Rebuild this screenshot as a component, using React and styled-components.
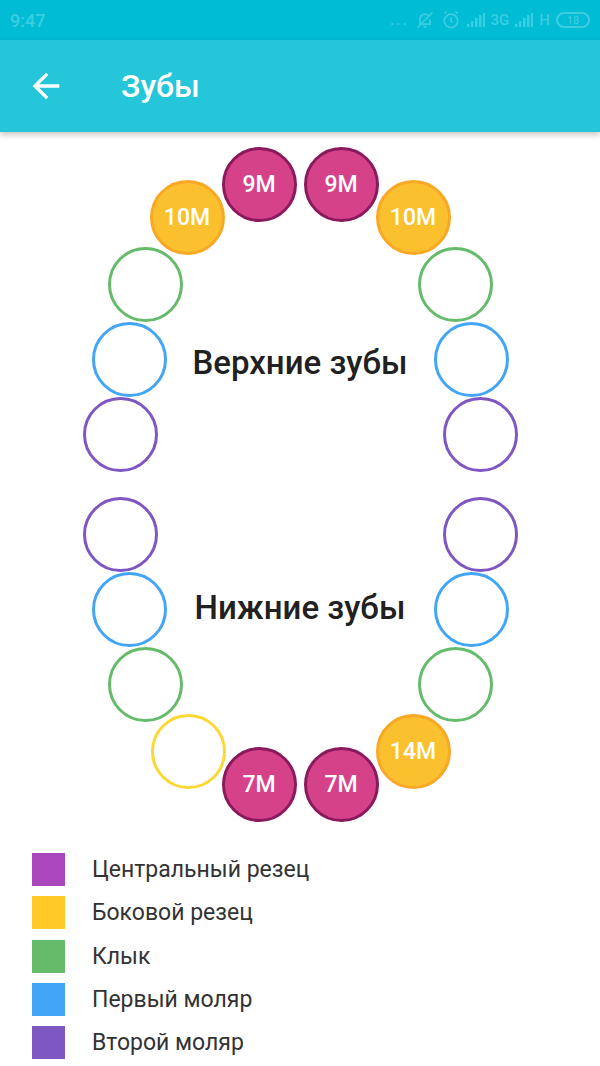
import styled, { createGlobalStyle } from "styled-components"

const GlobalStyle = createGlobalStyle`
  html, body {
    margin: 0;
    padding: 0;
    background: #ffffff;
    font-family: Roboto, "Noto Sans", Arial, sans-serif;
  }
`

const Page = styled.div`
  width: 600px;
  height: 1066px;
  overflow: hidden;
  background: #fff;
  display: flex;
  flex-direction: column;
`

const StatusBar = styled.div`
  height: 40px;
  background: #00bcd4;
  display: flex;
  align-items: center;
  justify-content: space-between;
  padding: 0 10px;
  color: #3ccde1;
  font-size: 18px;
  font-weight: 500;
`

const StatusIcons = styled.div`
  display: flex;
  align-items: center;
  gap: 6px;
  font-size: 15px;
  font-weight: 500;
`

const Battery = styled.div`
  width: 34px;
  height: 16px;
  border: 2px solid #3ccde1;
  border-radius: 9px;
  box-sizing: border-box;
  display: flex;
  align-items: center;
  justify-content: center;
  font-size: 11px;
`

const AppBar = styled.div`
  height: 92px;
  background: #26c6da;
  display: flex;
  align-items: center;
  box-shadow: 0 3px 6px rgba(0, 0, 0, 0.22);
  position: relative;
  z-index: 1;
`

const BackButton = styled.div`
  width: 40px;
  height: 40px;
  margin-left: 26px;
  display: flex;
  align-items: center;
  justify-content: center;
`

const Title = styled.h1`
  margin: 0 0 0 55px;
  color: #fff;
  font-size: 32px;
  font-weight: 500;
`

const Chart = styled.div`
  position: relative;
  height: 698px;
  display: flex;
  flex-direction: column;
  align-items: center;
`

const JawLabel = styled.div`
  font-size: 33px;
  font-weight: 500;
  color: #212121;
  line-height: 36px;
  margin-top: ${(p) => p.$top}px;
`

const Tooth = styled.div`
  position: absolute;
  width: 75px;
  height: 75px;
  box-sizing: border-box;
  border-radius: 50%;
  border: 3px solid ${(p) => p.$border};
  background: ${(p) => p.$fill || "transparent"};
  display: flex;
  align-items: center;
  justify-content: center;
  color: #fff;
  font-size: 23px;
  font-weight: 500;
`

const Legend = styled.div`
  display: flex;
  flex-direction: column;
  gap: 10.3px;
  padding: 23px 0 0 32px;
`

const LegendRow = styled.div`
  display: flex;
  align-items: center;
  gap: 27px;
  height: 33px;
`

const Swatch = styled.div`
  width: 33px;
  height: 33px;
  background: ${(p) => p.$color};
`

const LegendText = styled.span`
  font-size: 23px;
  color: #333;
`

const C = {
  central: "#ab47bc",
  lateral: "#fbc02d",
  canine: "#66bb6a",
  first: "#42a5f5",
  second: "#7e57c2",
}

const pink = { fill: "#d6428a", border: "#8b1a5c" }
const gold = { fill: "#fbc02d", border: "#f9a825" }

// centers relative to the chart top
const teeth = [
  { x: 259, y: 52, ...pink, label: "9M" },
  { x: 341, y: 52, ...pink, label: "9M" },
  { x: 187, y: 85, ...gold, label: "10M" },
  { x: 413, y: 85, ...gold, label: "10M" },
  { x: 145, y: 152, border: C.canine },
  { x: 455, y: 152, border: C.canine },
  { x: 129, y: 227, border: C.first },
  { x: 471, y: 227, border: C.first },
  { x: 120, y: 302, border: C.second },
  { x: 480, y: 302, border: C.second },

  { x: 120, y: 402, border: C.second },
  { x: 480, y: 402, border: C.second },
  { x: 129, y: 477, border: C.first },
  { x: 471, y: 477, border: C.first },
  { x: 145, y: 552, border: C.canine },
  { x: 455, y: 552, border: C.canine },
  { x: 188, y: 619, border: "#fdd835" },
  { x: 413, y: 619, ...gold, label: "14M" },
  { x: 259, y: 652, ...pink, label: "7M" },
  { x: 341, y: 652, ...pink, label: "7M" },
]

const legend = [
  { color: C.central, text: "Центральный резец" },
  { color: "#ffca28", text: "Боковой резец" },
  { color: C.canine, text: "Клык" },
  { color: C.first, text: "Первый моляр" },
  { color: C.second, text: "Второй моляр" },
]

const Signal = () => (
  <svg width="18" height="14" viewBox="0 0 18 14" fill="#3ccde1">
    <rect x="0" y="11" width="2.5" height="3" />
    <rect x="4" y="8" width="2.5" height="6" />
    <rect x="8" y="5" width="2.5" height="9" />
    <rect x="12" y="2" width="2.5" height="12" />
    <rect x="16" y="0" width="2" height="14" />
  </svg>
)

const App = () => {
  return (
    <Page>
      <GlobalStyle />
      <StatusBar>
        <span>9:47</span>
        <StatusIcons>
          <span style={{ letterSpacing: 2 }}>...</span>
          <svg width="20" height="20" viewBox="0 0 24 24" fill="none" stroke="#3ccde1" strokeWidth="2">
            <path d="M6 17V11a6 6 0 0 1 10-4.5M18 11v6H6M10 20h4M3 21L21 3" />
          </svg>
          <svg width="20" height="20" viewBox="0 0 24 24" fill="none" stroke="#3ccde1" strokeWidth="2">
            <circle cx="12" cy="13" r="8" />
            <path d="M12 9v4l2 2M4 4l3-2M20 4l-3-2" />
          </svg>
          <Signal />
          <span>3G</span>
          <Signal />
          <span>H</span>
          <Battery>18</Battery>
        </StatusIcons>
      </StatusBar>
      <AppBar>
        <BackButton>
          <svg width="40" height="40" viewBox="0 0 24 24" fill="#fff">
            <path d="M20 11H7.83l5.59-5.59L12 4l-8 8 8 8 1.41-1.41L7.83 13H20v-2z" />
          </svg>
        </BackButton>
        <Title>Зубы</Title>
      </AppBar>
      <Chart>
        {teeth.map((t, i) => (
          <Tooth
            key={i}
            $border={t.border}
            $fill={t.fill}
            style={{ left: t.x - 37.5, top: t.y - 37.5 }}
          >
            {t.label}
          </Tooth>
        ))}
        <JawLabel $top={213}>Верхние зубы</JawLabel>
        <JawLabel $top={209}>Нижние зубы</JawLabel>
      </Chart>
      <Legend>
        {legend.map((l) => (
          <LegendRow key={l.text}>
            <Swatch $color={l.color} />
            <LegendText>{l.text}</LegendText>
          </LegendRow>
        ))}
      </Legend>
    </Page>
  )
}

export default App
